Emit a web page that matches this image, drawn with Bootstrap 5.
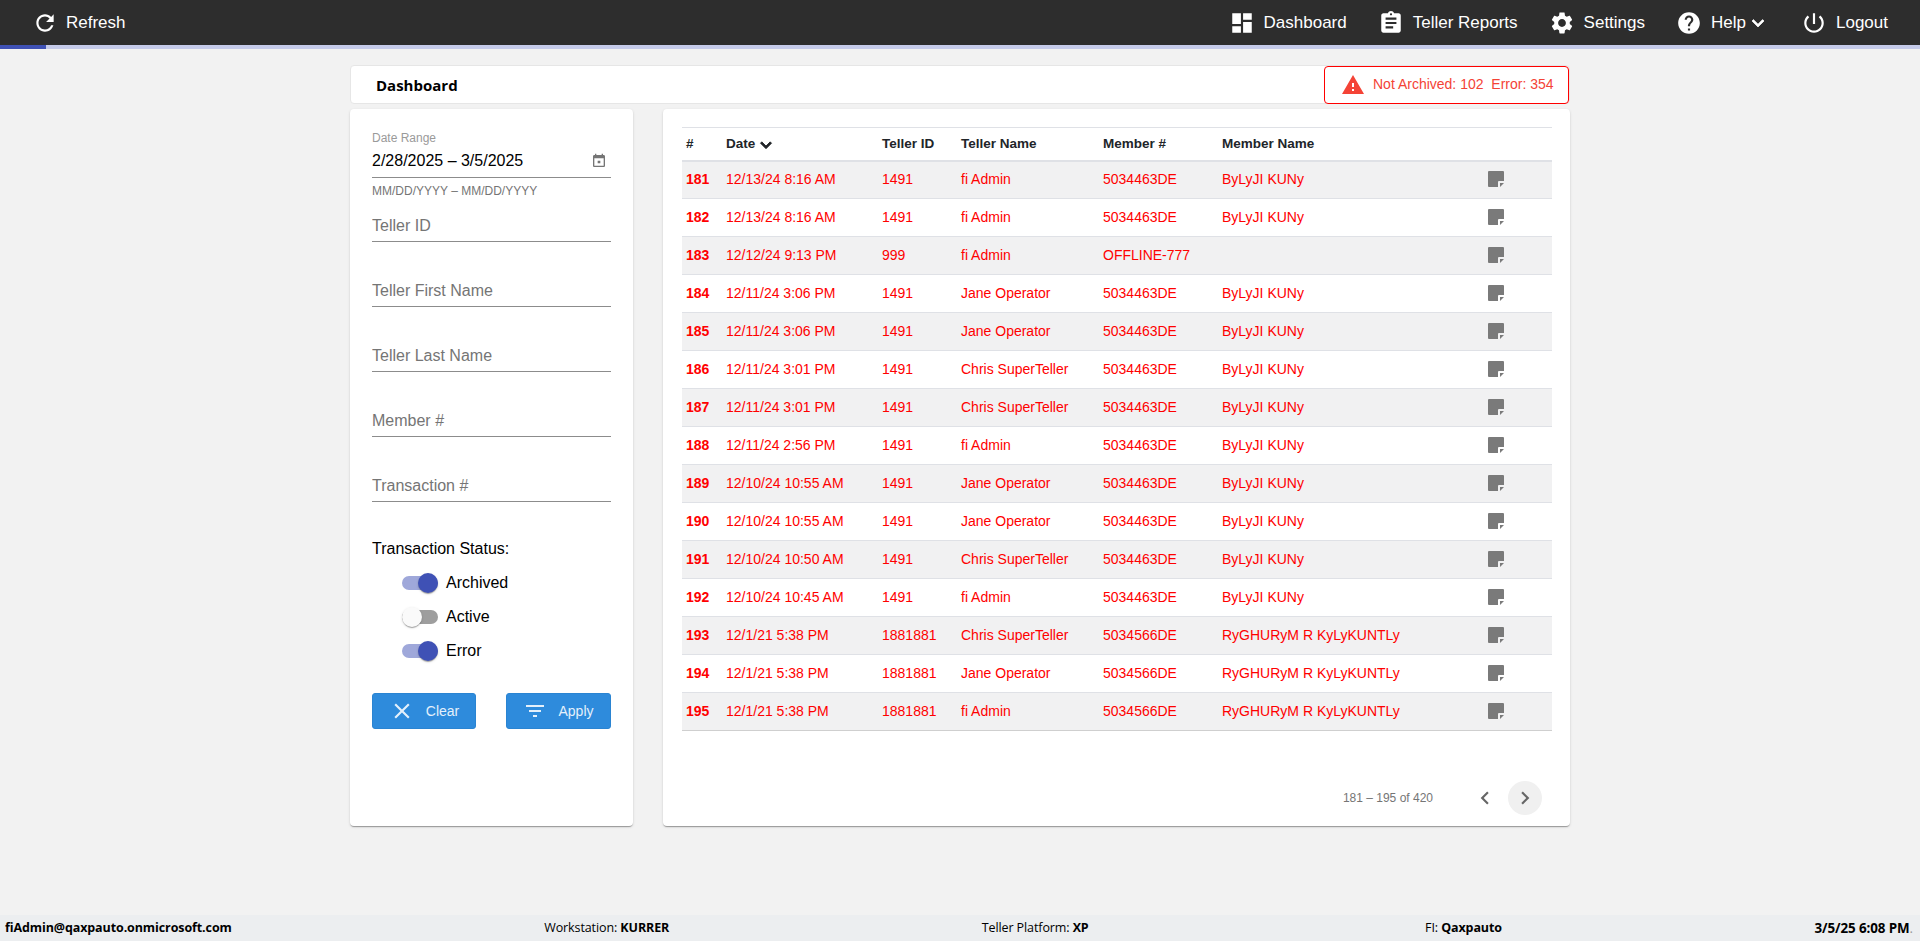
<!DOCTYPE html>
<html lang="en">
<head>
<meta charset="utf-8">
<title>Dashboard</title>
<link href="https://cdn.jsdelivr.net/npm/bootstrap@5.3.0/dist/css/bootstrap.min.css" rel="stylesheet">
<style>
html,body{height:100%}
body{background:#f2f2f2;font-family:"Liberation Sans",Arial,sans-serif;color:#000;overflow:hidden}
.page-wrap{height:941px}
.top-bar{height:45px;background:#2d2d2d;color:#fff;font-size:17px;padding:0 32px}
.top-item{display:flex;align-items:center;color:#fff;text-decoration:none;gap:9px}
.top-refresh{gap:8px}
.top-right{gap:31px}
.ico26{width:26px;height:26px;fill:currentColor;flex:none}
.ico24{width:24px;height:24px;fill:currentColor;flex:none}
.help-chev{margin-left:-9px;stroke:currentColor;stroke-width:.7}
.prog-track{height:4px;background:#c5cae9}
.prog-fill{height:4px;width:46px;background:#3f51b5}
.shell{width:1220px;margin:16px auto 0}
.title-bar{height:39px;background:#fff;border:1px solid #e6e6e6;border-radius:4px;padding-left:25px;font-family:"Open Sans","Noto Sans",sans-serif;font-weight:700;font-size:15px}
.title-text{padding-top:1px}
.alert-box{width:245px;height:38px;border:1px solid #f00;border-radius:4px;color:#f44336;font-family:"Liberation Sans",sans-serif;font-weight:400;font-size:14px;background:#fff;padding-left:16px;gap:8px;white-space:pre}
.alert-box svg{width:24px;height:24px;fill:#f44336}
.panels{gap:30px;margin-top:5px}
.panel{background:#fff;border-radius:4px;height:717px;box-shadow:0 2px 1px -1px rgba(0,0,0,.2),0 1px 1px 0 rgba(0,0,0,.14),0 1px 3px 0 rgba(0,0,0,.12)}
.panel-filter{width:283px;padding:22px 22px 0}
.panel-list{width:907px;padding:18px 18px 0 19px}
.mini-label{font-size:12px;line-height:14px;color:#9a9a9a}
.date-line{height:31px;margin-top:2px;border-bottom:1px solid #8c8c8c;font-size:16px;padding-bottom:3px;justify-content:space-between}
.date-line svg{width:16px;height:16px;fill:#757575;margin-right:4px}
.hint{font-size:12px;line-height:14px;color:#757575;margin-top:6px;margin-bottom:15px}
.line-input.form-control{height:29px;padding:0 0 2px;border:0;border-bottom:1px solid #8c8c8c;border-radius:0;background:transparent;font-size:16px;line-height:22px;margin-bottom:36px;box-shadow:none}
.line-input::placeholder{color:#757575;opacity:1}
.status-title{font-size:16px;line-height:24px;margin-top:-1px}
.toggles{gap:6px;margin:8px 0 28px 30px}
.tog-row{height:28px;gap:8px;font-size:16px}
.tog-track{width:36px;height:14px;border-radius:7px;background:#9fa8da;display:flex;align-items:center;justify-content:flex-end}
.tog-thumb{width:20px;height:20px;border-radius:50%;background:#3f51b5;box-shadow:0 2px 1px -1px rgba(0,0,0,.2),0 1px 1px 0 rgba(0,0,0,.14),0 1px 3px 0 rgba(0,0,0,.12)}
.tog-off .tog-track{background:#9e9e9e;justify-content:flex-start}
.tog-off .tog-thumb{background:#fafafa}
.act-btn.btn{height:36px;background:#2e8bdc;border:1px solid #2a84d2;border-radius:3px;color:#e4f0fb;font-size:14px;padding:0;display:flex;align-items:center;justify-content:center;gap:11px}
.btn-clear{width:104px}
.btn-apply{width:105px}
.tx-table{width:870px;table-layout:fixed;font-size:14px;margin:0;border-top:1px solid #dfe1e6}
.tx-table th,.tx-table td{padding:0 0 0 4px;vertical-align:middle;background:transparent;box-shadow:none}
.tx-table thead th{height:33px;font-weight:700;font-size:13.5px;color:#212529;border-bottom:2px solid #dfe1e6}
.tx-table tbody td{height:38px;color:#f00;border-bottom:1px solid #dfe1e6;white-space:nowrap}
.tx-table tbody tr:nth-child(odd) td{background:#f1f1f2}
.tx-table tbody tr:last-child td{border-bottom-color:#cfcfcf}
.sort-ico{width:22px;height:22px;fill:#212529;stroke:#212529;stroke-width:1;margin:-4px 0 -6px -4px}
.note-ico{width:16px;height:16px;display:block;margin:-2px 0 0 58px}
.num{font-weight:700}
.pager{margin-top:49px;padding-right:10px;height:36px;color:#757575;font-size:12px}
.pg-btn{width:34px;height:34px;border:0;padding:0;background:transparent;border-radius:50%;color:#666;display:flex;align-items:center;justify-content:center}
.pg-on{background:#f0f0f0;margin-left:6px}
.pg-prev{margin-left:35px}
.bottom-bar{height:26px;background:#eceef0;font-family:"Open Sans","Noto Sans",sans-serif;font-size:12.5px;padding:1px 7px 0 5px;letter-spacing:-.1px}
.bottom-bar b{font-weight:700}
.fi-item{margin-left:24px}
.stamp{font-size:13.4px}
.dot-faint{color:#9a9a9a}
</style>
</head>
<body>
<svg width="0" height="0" class="d-none">
<symbol id="i-refresh" viewBox="0 0 24 24"><path d="M17.65 6.35C16.2 4.9 14.21 4 12 4c-4.42 0-7.99 3.58-7.99 8s3.57 8 7.99 8c3.73 0 6.84-2.55 7.73-6h-2.08c-.82 2.33-3.04 4-5.65 4-3.31 0-6-2.69-6-6s2.69-6 6-6c1.66 0 3.14.69 4.22 1.78L13 11h7V4l-2.35 2.35z"/></symbol>
<symbol id="i-dash" viewBox="0 0 24 24"><path d="M3 13h8V3H3v10zm0 8h8v-6H3v6zm10 0h8V11h-8v10zm0-18v6h8V3h-8z"/></symbol>
<symbol id="i-report" viewBox="0 0 24 24"><path d="M19 3h-4.18C14.4 1.84 13.3 1 12 1c-1.3 0-2.4.84-2.82 2H5c-1.1 0-2 .9-2 2v14c0 1.1.9 2 2 2h14c1.1 0 2-.9 2-2V5c0-1.1-.9-2-2-2zm-7 0c.55 0 1 .45 1 1s-.45 1-1 1-1-.45-1-1 .45-1 1-1zm2 14H7v-2h7v2zm3-4H7v-2h10v2zm0-4H7V7h10v2z"/></symbol>
<symbol id="i-gear" viewBox="0 0 24 24"><path d="M19.14 12.94c.04-.3.06-.61.06-.94 0-.32-.02-.64-.07-.94l2.03-1.58c.18-.14.23-.41.12-.61l-1.92-3.32c-.12-.22-.37-.29-.59-.22l-2.39.96c-.5-.38-1.03-.7-1.62-.94l-.36-2.54c-.04-.24-.24-.41-.48-.41h-3.84c-.24 0-.43.17-.47.41l-.36 2.54c-.59.24-1.13.57-1.62.94l-2.39-.96c-.22-.08-.47 0-.59.22L2.74 8.87c-.12.21-.08.47.12.61l2.03 1.58c-.05.3-.09.63-.09.94s.02.64.07.94l-2.03 1.58c-.18.14-.23.41-.12.61l1.92 3.32c.12.22.37.29.59.22l2.39-.96c.5.38 1.03.7 1.62.94l.36 2.54c.05.24.24.41.48.41h3.84c.24 0 .44-.17.47-.41l.36-2.54c.59-.24 1.13-.56 1.62-.94l2.39.96c.22.08.47 0 .59-.22l1.92-3.32c.12-.22.07-.47-.12-.61l-2.01-1.58zM12 15.6c-1.98 0-3.6-1.62-3.6-3.6s1.62-3.6 3.6-3.6 3.6 1.62 3.6 3.6-1.62 3.6-3.6 3.6z"/></symbol>
<symbol id="i-help" viewBox="0 0 24 24"><path d="M12 2C6.48 2 2 6.48 2 12s4.48 10 10 10 10-4.48 10-10S17.52 2 12 2zm1 17h-2v-2h2v2zm2.07-7.75l-.9.92C13.45 12.9 13 13.5 13 15h-2v-.5c0-1.1.45-2.1 1.17-2.83l1.24-1.26c.37-.36.59-.86.59-1.41 0-1.1-.9-2-2-2s-2 .9-2 2H8c0-2.21 1.79-4 4-4s4 1.79 4 4c0 .88-.36 1.68-.93 2.25z"/></symbol>
<symbol id="i-power" viewBox="0 0 24 24"><path d="M13 3h-2v10h2V3zm4.83 2.17l-1.42 1.42C17.99 7.86 19 9.81 19 12c0 3.87-3.13 7-7 7s-7-3.13-7-7c0-2.19 1.01-4.14 2.58-5.42L6.17 5.17C4.23 6.82 3 9.26 3 12c0 4.97 4.03 9 9 9s9-4.03 9-9c0-2.74-1.23-5.18-3.17-6.83z"/></symbol>
<symbol id="i-down" viewBox="0 0 24 24"><path d="M16.59 8.59L12 13.17 7.41 8.59 6 10l6 6 6-6z"/></symbol>
<symbol id="i-warn" viewBox="0 0 24 24"><path d="M1 21h22L12 2 1 21zm12-3h-2v-2h2v2zm0-4h-2v-4h2v4z"/></symbol>
<symbol id="i-cal" viewBox="0 0 24 24"><path d="M19 3h-1V1h-2v2H8V1H6v2H5c-1.11 0-1.99.9-1.99 2L3 19c0 1.1.89 2 2 2h14c1.1 0 2-.9 2-2V5c0-1.1-.9-2-2-2zm0 16H5V8h14v11zM10 11.5h4v4h-4z"/></symbol>
<symbol id="i-x" viewBox="0 0 24 24"><path d="M19 6.41L17.59 5 12 10.59 6.41 5 5 6.41 10.59 12 5 17.59 6.41 19 12 13.41 17.59 19 19 17.59 13.41 12z"/></symbol>
<symbol id="i-filter" viewBox="0 0 24 24"><path d="M10 18h4v-2h-4v2zM3 6v2h18V6H3zm3 7h12v-2H6v2z"/></symbol>
<symbol id="i-left" viewBox="0 0 24 24"><path d="M15.41 7.41L14 6l-6 6 6 6 1.41-1.41L10.83 12z"/></symbol>
<symbol id="i-right" viewBox="0 0 24 24"><path d="M10 6L8.59 7.41 13.17 12l-4.58 4.59L10 18l6-6z"/></symbol>
<symbol id="i-note" viewBox="0 0 16 16"><path fill="#7a7a7a" d="M1 0h14a1 1 0 0 1 1 1v9h-5a1 1 0 0 0-1 1v5H1a1 1 0 0 1-1-1V1a1 1 0 0 1 1-1z"/><path fill="#7a7a7a" d="M12 12h4l-4 4z"/></symbol>
</svg>

<div class="page-wrap d-flex flex-column">
  <nav class="top-bar d-flex align-items-center justify-content-between">
    <a class="top-item top-refresh" href="#"><svg class="ico26"><use href="#i-refresh"/></svg>Refresh</a>
    <div class="top-right d-flex align-items-center">
      <a class="top-item" href="#"><svg class="ico26"><use href="#i-dash"/></svg>Dashboard</a>
      <a class="top-item" href="#"><svg class="ico26"><use href="#i-report"/></svg>Teller Reports</a>
      <a class="top-item" href="#"><svg class="ico26"><use href="#i-gear"/></svg>Settings</a>
      <a class="top-item" href="#"><svg class="ico26"><use href="#i-help"/></svg>Help<svg class="ico24 help-chev"><use href="#i-down"/></svg></a>
      <a class="top-item" href="#"><svg class="ico26"><use href="#i-power"/></svg>Logout</a>
    </div>
  </nav>
  <div class="prog-track"><div class="prog-fill"></div></div>

  <main class="shell">
    <div class="title-bar d-flex align-items-center justify-content-between">
      <span class="title-text">Dashboard</span>
      <div class="alert-box d-flex align-items-center"><svg><use href="#i-warn"/></svg><span>Not Archived: 102  Error: 354</span></div>
    </div>
    <div class="panels d-flex">
      <aside class="panel panel-filter">
        <div class="mini-label">Date Range</div>
        <div class="date-line d-flex align-items-center"><span>2/28/2025 – 3/5/2025</span><svg><use href="#i-cal"/></svg></div>
        <div class="hint">MM/DD/YYYY – MM/DD/YYYY</div>
        <input class="form-control line-input" placeholder="Teller ID">
        <input class="form-control line-input" placeholder="Teller First Name">
        <input class="form-control line-input" placeholder="Teller Last Name">
        <input class="form-control line-input" placeholder="Member #">
        <input class="form-control line-input" placeholder="Transaction #">
        <div class="status-title">Transaction Status:</div>
        <div class="toggles d-flex flex-column">
          <div class="tog-row d-flex align-items-center"><span class="tog-track"><span class="tog-thumb"></span></span>Archived</div>
          <div class="tog-row tog-off d-flex align-items-center"><span class="tog-track"><span class="tog-thumb"></span></span>Active</div>
          <div class="tog-row d-flex align-items-center"><span class="tog-track"><span class="tog-thumb"></span></span>Error</div>
        </div>
        <div class="d-flex justify-content-between">
          <button class="btn act-btn btn-clear"><svg class="ico26"><use href="#i-x"/></svg>Clear</button>
          <button class="btn act-btn btn-apply"><svg class="ico24"><use href="#i-filter"/></svg>Apply</button>
        </div>
      </aside>
      <section class="panel panel-list">
        <table class="table tx-table">
          <colgroup><col style="width:40px"><col style="width:156px"><col style="width:79px"><col style="width:142px"><col style="width:119px"><col style="width:208px"><col></colgroup>
          <thead><tr><th>#</th><th>Date <svg class="sort-ico"><use href="#i-down"/></svg></th><th>Teller ID</th><th>Teller Name</th><th>Member #</th><th>Member Name</th><th></th></tr></thead>
          <tbody>
            <tr><td class="num">181</td><td>12/13/24 8:16 AM</td><td>1491</td><td>fi Admin</td><td>5034463DE</td><td>ByLyJI KUNy</td><td><svg class="note-ico"><use href="#i-note"/></svg></td></tr>
            <tr><td class="num">182</td><td>12/13/24 8:16 AM</td><td>1491</td><td>fi Admin</td><td>5034463DE</td><td>ByLyJI KUNy</td><td><svg class="note-ico"><use href="#i-note"/></svg></td></tr>
            <tr><td class="num">183</td><td>12/12/24 9:13 PM</td><td>999</td><td>fi Admin</td><td>OFFLINE-777</td><td></td><td><svg class="note-ico"><use href="#i-note"/></svg></td></tr>
            <tr><td class="num">184</td><td>12/11/24 3:06 PM</td><td>1491</td><td>Jane Operator</td><td>5034463DE</td><td>ByLyJI KUNy</td><td><svg class="note-ico"><use href="#i-note"/></svg></td></tr>
            <tr><td class="num">185</td><td>12/11/24 3:06 PM</td><td>1491</td><td>Jane Operator</td><td>5034463DE</td><td>ByLyJI KUNy</td><td><svg class="note-ico"><use href="#i-note"/></svg></td></tr>
            <tr><td class="num">186</td><td>12/11/24 3:01 PM</td><td>1491</td><td>Chris SuperTeller</td><td>5034463DE</td><td>ByLyJI KUNy</td><td><svg class="note-ico"><use href="#i-note"/></svg></td></tr>
            <tr><td class="num">187</td><td>12/11/24 3:01 PM</td><td>1491</td><td>Chris SuperTeller</td><td>5034463DE</td><td>ByLyJI KUNy</td><td><svg class="note-ico"><use href="#i-note"/></svg></td></tr>
            <tr><td class="num">188</td><td>12/11/24 2:56 PM</td><td>1491</td><td>fi Admin</td><td>5034463DE</td><td>ByLyJI KUNy</td><td><svg class="note-ico"><use href="#i-note"/></svg></td></tr>
            <tr><td class="num">189</td><td>12/10/24 10:55 AM</td><td>1491</td><td>Jane Operator</td><td>5034463DE</td><td>ByLyJI KUNy</td><td><svg class="note-ico"><use href="#i-note"/></svg></td></tr>
            <tr><td class="num">190</td><td>12/10/24 10:55 AM</td><td>1491</td><td>Jane Operator</td><td>5034463DE</td><td>ByLyJI KUNy</td><td><svg class="note-ico"><use href="#i-note"/></svg></td></tr>
            <tr><td class="num">191</td><td>12/10/24 10:50 AM</td><td>1491</td><td>Chris SuperTeller</td><td>5034463DE</td><td>ByLyJI KUNy</td><td><svg class="note-ico"><use href="#i-note"/></svg></td></tr>
            <tr><td class="num">192</td><td>12/10/24 10:45 AM</td><td>1491</td><td>fi Admin</td><td>5034463DE</td><td>ByLyJI KUNy</td><td><svg class="note-ico"><use href="#i-note"/></svg></td></tr>
            <tr><td class="num">193</td><td>12/1/21 5:38 PM</td><td>1881881</td><td>Chris SuperTeller</td><td>5034566DE</td><td>RyGHURyM R KyLyKUNTLy</td><td><svg class="note-ico"><use href="#i-note"/></svg></td></tr>
            <tr><td class="num">194</td><td>12/1/21 5:38 PM</td><td>1881881</td><td>Jane Operator</td><td>5034566DE</td><td>RyGHURyM R KyLyKUNTLy</td><td><svg class="note-ico"><use href="#i-note"/></svg></td></tr>
            <tr><td class="num">195</td><td>12/1/21 5:38 PM</td><td>1881881</td><td>fi Admin</td><td>5034566DE</td><td>RyGHURyM R KyLyKUNTLy</td><td><svg class="note-ico"><use href="#i-note"/></svg></td></tr>
          </tbody>
        </table>
        <div class="pager d-flex align-items-center justify-content-end">
          <span>181 – 195 of 420</span>
          <button class="pg-btn pg-prev"><svg class="ico26"><use href="#i-left"/></svg></button>
          <button class="pg-btn pg-on"><svg class="ico26"><use href="#i-right"/></svg></button>
        </div>
      </section>
    </div>
  </main>

  <footer class="bottom-bar mt-auto d-flex align-items-center justify-content-between">
    <b>fiAdmin@qaxpauto.onmicrosoft.com</b>
    <span>Workstation: <b>KURRER</b></span>
    <span>Teller Platform: <b>XP</b></span>
    <span class="fi-item">FI: <b>Qaxpauto</b></span>
    <span class="stamp"><b>3/5/25 6:08 PM</b><span class="dot-faint">.</span></span>
  </footer>
</div>
<script src="https://cdn.jsdelivr.net/npm/bootstrap@5.3.0/dist/js/bootstrap.bundle.min.js"></script>
</body>
</html>
